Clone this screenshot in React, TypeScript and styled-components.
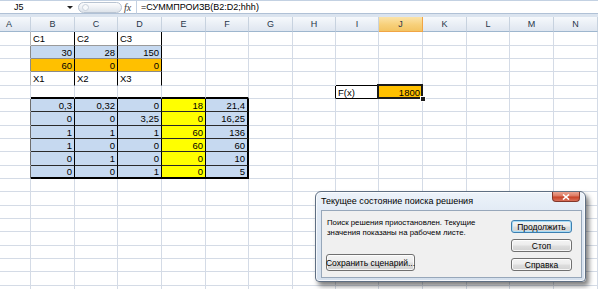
import React from 'react';
import styled, { createGlobalStyle, css } from 'styled-components';

const GlobalStyle = createGlobalStyle`
  html, body { margin: 0; padding: 0; background: #fff; overflow: hidden; }
  body { font-family: "Liberation Sans", Arial, sans-serif; }
`;

const GRID = '#d4dbe6';
const BLUE = '#c6d9f0';
const ORANGE = '#ffc000';
const YELLOW = '#ffff00';

const COLS = ['A', 'B', 'C', 'D', 'E', 'F', 'G', 'H', 'I', 'J', 'K', 'L', 'M', 'N'];
const COL_W = [43, 44, 43, 44, 44, 43, 44, 43, 43, 44, 44, 43, 44, 44];
const ROW_COUNT = 20;
const ROW_H = Array.from({ length: ROW_COUNT }, (_, i) => [14, 13, 13][i % 3]);

type Spec = {
  text?: string;
  right?: boolean;
  fill?: string;
  rc?: string;
  rw?: number;
  bc?: string;
  bw?: number;
  sel?: boolean;
};

function buildSheet(): Record<string, Spec> {
  const m: Record<string, Spec> = {};
  const set = (c: string, r: number, s: Spec) => {
    m[c + r] = { ...(m[c + r] || {}), ...s };
  };
  const b1 = ['B', 'C', 'D'];
  const top = ['C1', 'C2', 'C3'];
  const coef = ['30', '28', '150'];
  const xs = ['60', '0', '0'];
  const names = ['X1', 'X2', 'X3'];
  b1.forEach((c, i) => {
    set(c, 1, { text: top[i], rc: '#000', bc: '#9a9a9a' });
    set(c, 2, { text: coef[i], right: true, fill: BLUE, rc: '#000', bc: '#8a8a8a' });
    set(c, 3, { text: xs[i], right: true, fill: ORANGE, rc: '#000', bc: '#8a8a8a' });
    set(c, 4, { text: names[i], rc: '#000' });
  });
  set('A', 1, { rc: '#b4b4b4' });
  set('A', 2, { rc: '#8a8a8a' });
  set('A', 3, { rc: '#8a8a8a' });
  set('A', 4, { rc: '#b4b4b4' });

  const table = [
    ['0,3', '0,32', '0', '18', '21,4'],
    ['0', '0', '3,25', '0', '16,25'],
    ['1', '1', '1', '60', '136'],
    ['1', '0', '0', '60', '60'],
    ['0', '1', '0', '0', '10'],
    ['0', '0', '1', '0', '5'],
  ];
  const tc = ['B', 'C', 'D', 'E', 'F'];
  tc.forEach((c) => set(c, 5, { bc: '#000', bw: 2 }));
  table.forEach((row, ri) => {
    const r = 6 + ri;
    set('A', r, { rc: '#6e6e6e' });
    row.forEach((v, ci) => {
      const c = tc[ci];
      set(c, r, {
        text: v,
        right: true,
        fill: c === 'E' ? YELLOW : BLUE,
        rc: '#000',
        rw: c === 'F' ? 2 : 1,
        bc: ri === 5 ? '#000' : '#2a2a2a',
        bw: ri === 5 ? 2 : 1,
      });
    });
  });

  set('H', 5, { rc: '#000' });
  set('I', 4, { bc: '#000' });
  set('I', 5, { text: 'F(x)', rc: '#000', bc: '#000' });
  set('J', 5, { text: '1800', right: true, fill: ORANGE, sel: true });
  return m;
}

const SHEET = buildSheet();

const Window = styled.div`
  position: relative;
  width: 598px;
  height: 289px;
  overflow: hidden;
  background: #fff;
`;

const FormulaBar = styled.div`
  display: flex;
  height: 17px;
  box-sizing: border-box;
  background: #dbe4ef;
  border-top: 1px solid #c3d1e2;
  padding-bottom: 3px;
`;

const NameBox = styled.div`
  width: 75px;
  box-sizing: border-box;
  background: #fff;
  border-bottom: 1px solid #b0c1d6;
  display: flex;
  align-items: center;
  justify-content: space-between;
  padding: 0 2px 0 14px;
  font-size: 9px;
  color: #000;
`;

const DropArrow = styled.span`
  width: 0;
  height: 0;
  border-left: 3px solid transparent;
  border-right: 3px solid transparent;
  border-top: 3px solid #222;
`;

const Controls = styled.div`
  width: 61px;
  box-sizing: border-box;
  background: #fff;
  border-bottom: 1px solid #b0c1d6;
  display: flex;
  align-items: center;
  padding-left: 3px;
`;

const Grip = styled.div`
  position: relative;
  width: 44px;
  height: 11px;
  box-sizing: border-box;
  border: 1px solid #b9c4d2;
  border-radius: 6px;
  background: linear-gradient(180deg, #fdfdfe 0%, #eef1f5 50%, #dde3ea 100%);
  &::before {
    content: '';
    position: absolute;
    left: 3px;
    top: 1px;
    width: 5px;
    height: 5px;
    border-radius: 50%;
    border: 1px solid #c9d1db;
    background: #f7f9fb;
  }
`;

const Fx = styled.span`
  font-family: "Liberation Serif", "Times New Roman", serif;
  font-style: italic;
  font-size: 10px;
  color: #3a3a3a;
  margin-left: 2px;
`;

const FormulaInput = styled.div`
  flex: 1;
  box-sizing: border-box;
  background: #fff;
  border-left: 1px solid #c3d1e2;
  border-bottom: 1px solid #b0c1d6;
  display: flex;
  align-items: center;
  padding-left: 4px;
  font-size: 9px;
  color: #000;
`;

const Sheet = styled.div`
  display: grid;
  grid-template-columns: ${COL_W.map((w) => `${w}px`).join(' ')};
  grid-template-rows: 15px ${ROW_H.map((h) => `${h}px`).join(' ')};
  margin-left: -12px;
`;

const HeaderCell = styled.div<{ $active?: boolean }>`
  box-sizing: border-box;
  background: ${(p) =>
    p.$active
      ? 'linear-gradient(180deg, #fbe3a9 0%, #f7d07a 55%, #f3c463 100%)'
      : 'linear-gradient(180deg, #f6f9fc 0%, #e9eef5 55%, #dfe6f0 100%)'};
  border-right: 1px solid ${(p) => (p.$active ? '#f1a545' : '#c7d2df')};
  border-bottom: 1px solid ${(p) => (p.$active ? '#f1a545' : '#9eb6ce')};
  display: flex;
  align-items: center;
  justify-content: center;
  font-size: 9px;
  color: #27364a;
`;

const Cell = styled.div<{
  $fill: string;
  $right: boolean;
  $rc: string;
  $rw: number;
  $bc: string;
  $bw: number;
  $sel: boolean;
}>`
  box-sizing: border-box;
  background: ${(p) => p.$fill};
  border-right: ${(p) => p.$rw}px solid ${(p) => p.$rc};
  border-bottom: ${(p) => p.$bw}px solid ${(p) => p.$bc};
  display: flex;
  align-items: center;
  justify-content: ${(p) => (p.$right ? 'flex-end' : 'flex-start')};
  padding: 0 2px;
  font-size: 9.5px;
  color: #000;
  white-space: nowrap;
  ${(p) =>
    p.$sel &&
    css`
      position: relative;
      z-index: 2;
      &::before {
        content: '';
        position: absolute;
        left: -2px;
        top: -2px;
        right: -1px;
        bottom: -1px;
        border: 2px solid #1b1b1b;
        pointer-events: none;
      }
      &::after {
        content: '';
        position: absolute;
        right: -4px;
        bottom: -4px;
        width: 6px;
        height: 6px;
        box-sizing: border-box;
        background: #1b1b1b;
        border: 1px solid #fff;
      }
    `}
`;

const Dialog = styled.div`
  position: absolute;
  left: 315px;
  top: 191px;
  width: 271px;
  height: 91px;
  box-sizing: border-box;
  border: 1px solid #5f6f83;
  border-radius: 6px 6px 4px 4px;
  background: linear-gradient(180deg, #edf3fa 0%, #e0e9f4 25%, #d5e0ed 100%);
  box-shadow: inset 0 0 0 1px rgba(255, 255, 255, 0.75), 3px 4px 5px rgba(0, 0, 0, 0.5);
  display: flex;
  flex-direction: column;
  padding: 0 3px 3px 5px;
  z-index: 5;
`;

const TitleBar = styled.div`
  height: 18px;
  display: flex;
  justify-content: space-between;
  align-items: flex-start;
`;

const Title = styled.span`
  font-size: 9px;
  color: #000;
  line-height: 19px;
  white-space: nowrap;
`;

const CloseButton = styled.div`
  width: 28px;
  height: 10px;
  margin-right: 2px;
  box-sizing: border-box;
  border: 1px solid #83372a;
  border-top: none;
  border-radius: 0 0 4px 4px;
  background: linear-gradient(180deg, #eca592 0%, #dc7861 45%, #c84327 55%, #d8705a 100%);
  display: flex;
  align-items: center;
  justify-content: center;
`;

const Panel = styled.div`
  flex: 1;
  box-sizing: border-box;
  background: #f0f0f0;
  border: 1px solid #97a7ba;
  display: grid;
  grid-template-columns: 1fr 61px;
  padding: 9px 9px 6px 5px;
`;

const LeftColumn = styled.div`
  display: flex;
  flex-direction: column;
  justify-content: space-between;
  align-items: flex-start;
`;

const Message = styled.p`
  margin: -2px 0 0 0;
  font-size: 7.8px;
  line-height: 10px;
  color: #000;
  white-space: nowrap;
`;

const ButtonColumn = styled.div`
  display: flex;
  flex-direction: column;
  gap: 6px;
`;

const Button = styled.button<{ $default?: boolean; $tall?: boolean; $w?: number }>`
  all: unset;
  box-sizing: border-box;
  width: ${(p) => (p.$w ? `${p.$w}px` : '100%')};
  height: ${(p) => (p.$tall ? 17 : 13)}px;
  border: 1px solid ${(p) => (p.$default ? '#3c7fb1' : '#707070')};
  border-radius: 3px;
  background: linear-gradient(180deg, #f4f4f4 0%, #ececec 48%, #dedede 52%, #d2d2d2 100%);
  box-shadow: inset 0 0 0 1px ${(p) => (p.$default ? '#a8dcf6' : 'rgba(255,255,255,0.8)')};
  display: flex;
  align-items: center;
  justify-content: center;
  font-family: "Liberation Sans", Arial, sans-serif;
  font-size: 8.5px;
  color: #000;
  white-space: nowrap;
  margin-left: ${(p) => (p.$tall ? '-1px' : '0')};
`;

function ColumnHeaders() {
  return (
    <>
      {COLS.map((c) => (
        <HeaderCell key={`h${c}`} $active={c === 'J'}>
          {c}
        </HeaderCell>
      ))}
    </>
  );
}

function Cells() {
  const out: React.ReactNode[] = [];
  for (let r = 1; r <= ROW_COUNT; r++) {
    for (const c of COLS) {
      const s = SHEET[c + r] || {};
      out.push(
        <Cell
          key={c + r}
          $fill={s.fill || '#fff'}
          $right={!!s.right}
          $rc={s.rc || GRID}
          $rw={s.rw || 1}
          $bc={s.bc || GRID}
          $bw={s.bw || 1}
          $sel={!!s.sel}
        >
          {s.text}
        </Cell>
      );
    }
  }
  return <>{out}</>;
}

export default function App() {
  return (
    <>
      <GlobalStyle />
      <Window>
        <FormulaBar>
          <NameBox>
            <span>J5</span>
            <DropArrow />
          </NameBox>
          <Controls>
            <Grip />
            <Fx>fx</Fx>
          </Controls>
          <FormulaInput>=СУММПРОИЗВ(B2:D2;hhh)</FormulaInput>
        </FormulaBar>
        <Sheet>
          <ColumnHeaders />
          <Cells />
        </Sheet>
        <Dialog>
          <TitleBar>
            <Title>Текущее состояние поиска решения</Title>
            <CloseButton>
              <svg width="8" height="6" viewBox="0 0 8 6">
                <path d="M1 0.5 L7 5.5 M7 0.5 L1 5.5" stroke="#fff" strokeWidth="1.6" />
              </svg>
            </CloseButton>
          </TitleBar>
          <Panel>
            <LeftColumn>
              <Message>
                Поиск решения приостановлен. Текущие
                <br />
                значения показаны на рабочем листе.
              </Message>
              <Button $tall $w={89}>Сохранить сценарий...</Button>
            </LeftColumn>
            <ButtonColumn>
              <Button $default>Продолжить</Button>
              <Button>Стоп</Button>
              <Button>Справка</Button>
            </ButtonColumn>
          </Panel>
        </Dialog>
      </Window>
    </>
  );
}
